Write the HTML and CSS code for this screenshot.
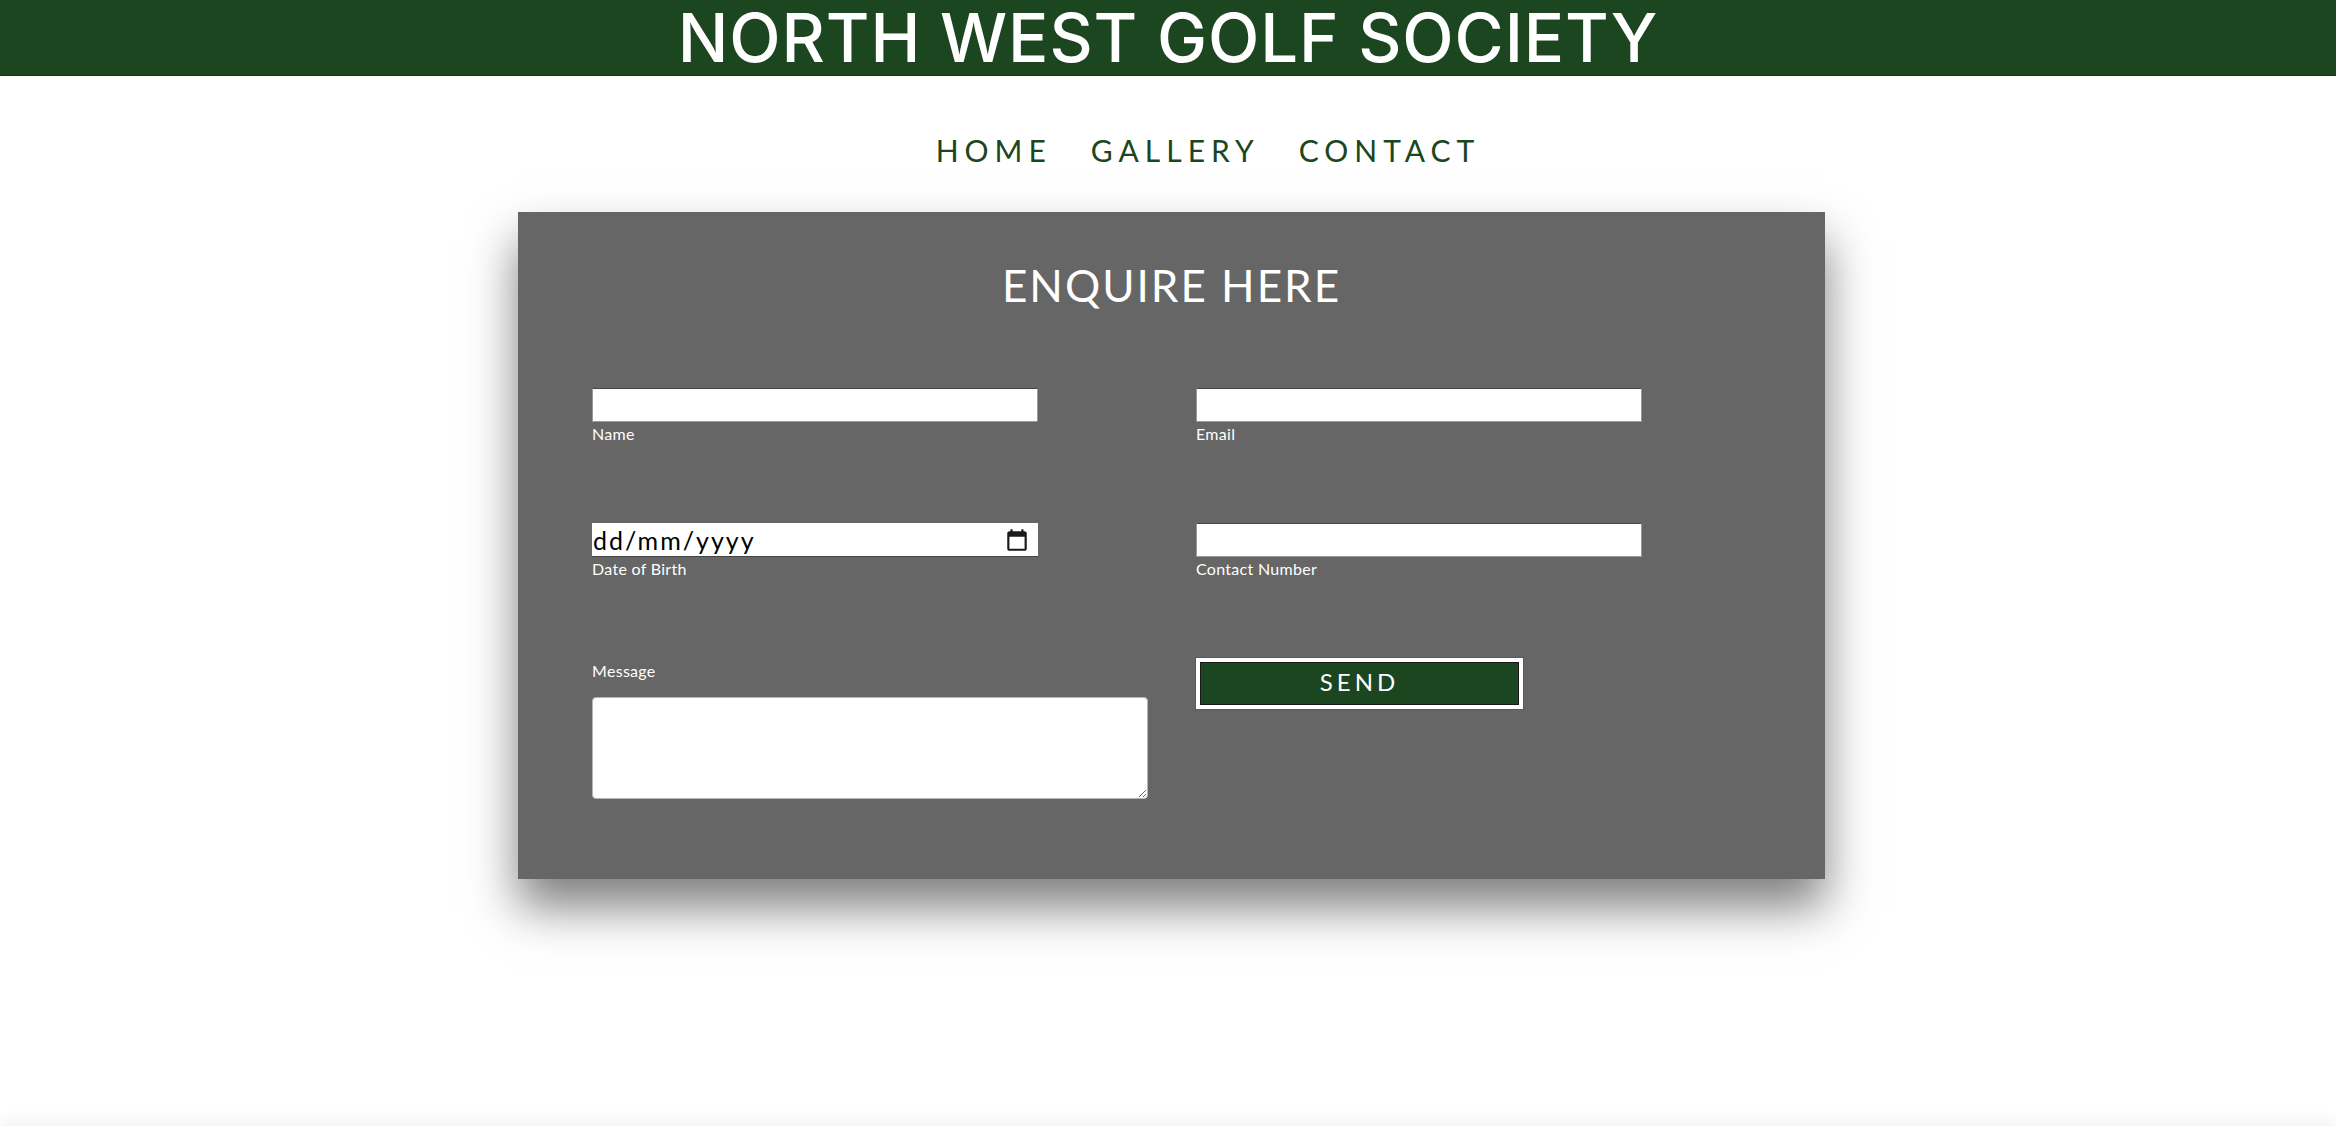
FILE: index.html
```html
<!DOCTYPE html>
<html lang="en">
<head>
<meta charset="utf-8">
<title>North West Golf Society - Contact</title>
<link rel="stylesheet" href="styles.css">
</head>
<body>
<header class="site-header">
  <h1 class="site-title">NORTH WEST GOLF SOCIETY</h1>
</header>
<nav class="site-nav">
  <ul class="nav-list">
    <li><a class="nav-link" href="#">HOME</a></li>
    <li><a class="nav-link" href="#">GALLERY</a></li>
    <li><a class="nav-link" href="#">CONTACT</a></li>
  </ul>
</nav>
<main class="main">
  <section class="card">
    <h2 class="card-title">ENQUIRE HERE</h2>
    <form class="form-grid">
      <div class="field">
        <input class="text-input" type="text" id="name">
        <label class="field-label" for="name">Name</label>
      </div>
      <div class="field">
        <input class="text-input" type="email" id="email">
        <label class="field-label" for="email">Email</label>
      </div>
      <div class="field">
        <div class="date-box">
          <input class="date-input" type="text" id="dob" placeholder="dd/mm/yyyy">
          <svg class="cal-icon" viewBox="0 0 24 24" width="24" height="24" aria-hidden="true"><path d="M19 4h-1V2h-2v2H8V2H6v2H5c-1.1 0-2 .9-2 2v14c0 1.1.9 2 2 2h14c1.1 0 2-.9 2-2V6c0-1.1-.9-2-2-2zm0 16H5V9h14v11z"/></svg>
        </div>
        <label class="field-label" for="dob">Date of Birth</label>
      </div>
      <div class="field">
        <input class="text-input" type="tel" id="phone">
        <label class="field-label" for="phone">Contact Number</label>
      </div>
      <div class="field">
        <label class="field-label msg-label" for="msg">Message</label>
        <textarea class="message" id="msg"></textarea>
      </div>
      <div class="field">
        <button class="send-btn" type="button">SEND</button>
      </div>
    </form>
  </section>
</main>
<footer class="site-footer"></footer>
</body>
</html>
```
FILE: styles.css
```css
html, body {
  margin: 0;
  padding: 0;
  background: #ffffff;
}
body {
  font-family: Lato, "Noto Sans", sans-serif;
}
.site-header {
  background: #1b4620;
  height: 75px;
  border-bottom: 1px solid #13331a;
  display: flex;
  justify-content: center;
  align-items: center;
}
.site-title {
  margin: 0;
  font-family: Inter, "Noto Sans", sans-serif;
  font-weight: 500;
  font-size: 67px;
  line-height: 75px;
  letter-spacing: 0.9px;
  color: #ffffff;
}
.site-nav {
  padding: 49px 0 31px;
}
.nav-list {
  list-style: none;
  margin: 0;
  padding: 0 0 0 80px;
  display: flex;
  justify-content: center;
  gap: 39px;
  line-height: 50px;
}
.nav-link {
  text-decoration: none;
  color: #1b4620;
  font-family: Lato, sans-serif;
  font-size: 30px;
  letter-spacing: 6px;
}
.main {
  min-height: 914px;
  padding-left: 7px;
}
.card {
  box-sizing: border-box;
  width: 1307px;
  margin: 0 auto;
  background: #666666;
  padding: 51px 74px 80px;
  box-shadow: 0 28px 45px rgba(0, 0, 0, 0.5);
}
.card-title {
  margin: 0;
  text-align: center;
  color: #ffffff;
  font-weight: 400;
  font-size: 44px;
  line-height: 44px;
  letter-spacing: 2px;
}
.form-grid {
  margin-top: 81px;
  display: grid;
  grid-template-columns: 555px 555px;
  column-gap: 49px;
  row-gap: 80px;
}
.field {
  display: flex;
  flex-direction: column;
  align-items: flex-start;
}
.text-input {
  box-sizing: border-box;
  width: 446px;
  height: 34px;
  margin: 0;
  border: 1px solid #9a9a9a;
  border-top-color: #444444;
  background: #ffffff;
  font-size: 20px;
  padding: 0 4px;
  outline: none;
}
.date-box {
  box-sizing: border-box;
  width: 446px;
  height: 34px;
  background: #ffffff;
  display: flex;
  align-items: center;
  border-bottom: 1px solid #444444;
  padding: 0 8px 0 0;
}
.date-input {
  flex: 1;
  min-width: 0;
  border: none;
  outline: none;
  background: transparent;
  padding: 0 0 0 1px;
  font-family: Lato, sans-serif;
  font-weight: 400;
  font-size: 25px;
  letter-spacing: 2px;
  color: #000000;
}
.date-input::placeholder {
  color: #000000;
  opacity: 1;
}
.cal-icon {
  width: 26px;
  height: 26px;
  fill: #1a1a1a;
}
.field-label {
  margin-top: 3px;
  color: #ffffff;
  font-size: 16px;
  line-height: 18px;
  letter-spacing: 0.3px;
}
.msg-label {
  margin-top: 2px;
  line-height: 22px;
}
.message {
  box-sizing: border-box;
  margin-top: 15px;
  width: 556px;
  height: 102px;
  border: 1px solid #b5b5b5;
  border-radius: 4px;
  background: #ffffff;
  outline: none;
}
.send-btn {
  box-sizing: border-box;
  width: 327px;
  height: 51px;
  margin: 0;
  background: #1b4620;
  border: 4px solid #ffffff;
  box-shadow: inset 0 0 0 1px #1a1a1a, 0 0 0 1px #5a5a5a;
  color: #ffffff;
  font-family: Lato, sans-serif;
  font-size: 24px;
  line-height: 1;
  letter-spacing: 4px;
  padding: 0 0 3px;
  cursor: pointer;
}
.site-footer {
  height: 120px;
  background: #ffffff;
  box-shadow: 0 -6px 14px rgba(0, 0, 0, 0.05);
}
```
